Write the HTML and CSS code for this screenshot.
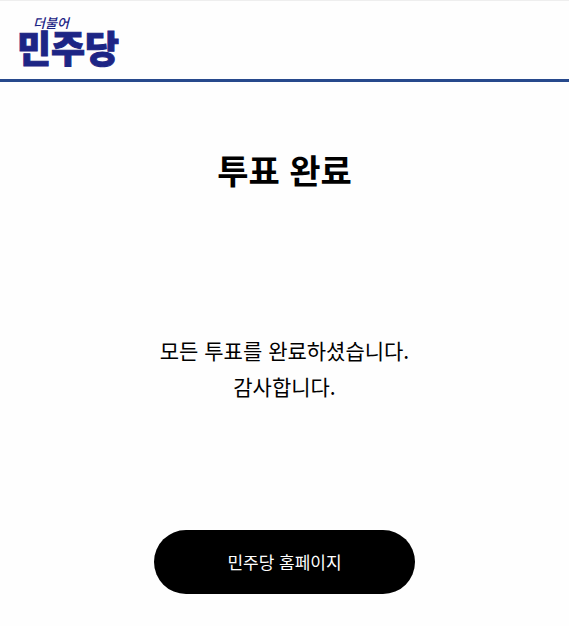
FILE: index.html
```html
<!DOCTYPE html>
<html lang="ko">
<head>
	<meta charset="UTF-8">
	<meta name="viewport" content="width=device-width, initial-scale=1">
	<title>투표 완료</title>
	<link rel="stylesheet" href="styles.css">
</head>
<body>
	<header class="header">
		<a class="logo" href="#">
			<span class="logo-top">더불어</span>
			<span class="logo-name">민주당</span>
		</a>
	</header>
	<main class="content">
		<h1 class="title">투표 완료</h1>
		<p class="message">모든 투표를 완료하셨습니다.<br>감사합니다.</p>
		<a class="home" href="#">민주당 홈페이지</a>
	</main>
</body>
</html>
```

FILE: styles.css
```css
body{
	margin: 0;background-color: #fefefe;color: #000;font-family: "Noto Sans CJK KR", sans-serif;
}
.header{
	padding: 14px 17px 16px;border-top: 1px solid #eee;border-bottom: 3px solid #27498c;
}
.logo{
	display: inline-flex;flex-direction: column;color: #1d2585;text-decoration: none;vertical-align: top;
}
.logo-top{
	margin-left: 16px;font-size: 13px;line-height: 16px;font-style: italic;font-weight: 500;
}
/* stroke makes the wordmark heavier than the black weight */
.logo-name{
	font-size: 37px;line-height: 32px;font-weight: 900;-webkit-text-stroke: 1px #1d2585;
}
.content{
	display: flex;flex-direction: column;align-items: center;padding: 64px 16px 32px;text-align: center;
}
.title{
	margin: 0;font-size: 34px;line-height: 48px;font-weight: 700;
}
.message{
	margin: 138px 0 126px;font-size: 21px;line-height: 36px;
}
.home{
	padding: 0 73px;border-radius: 32px;background-color: #000;color: #fff;font-size: 17px;line-height: 64px;text-decoration: none;
}
```
